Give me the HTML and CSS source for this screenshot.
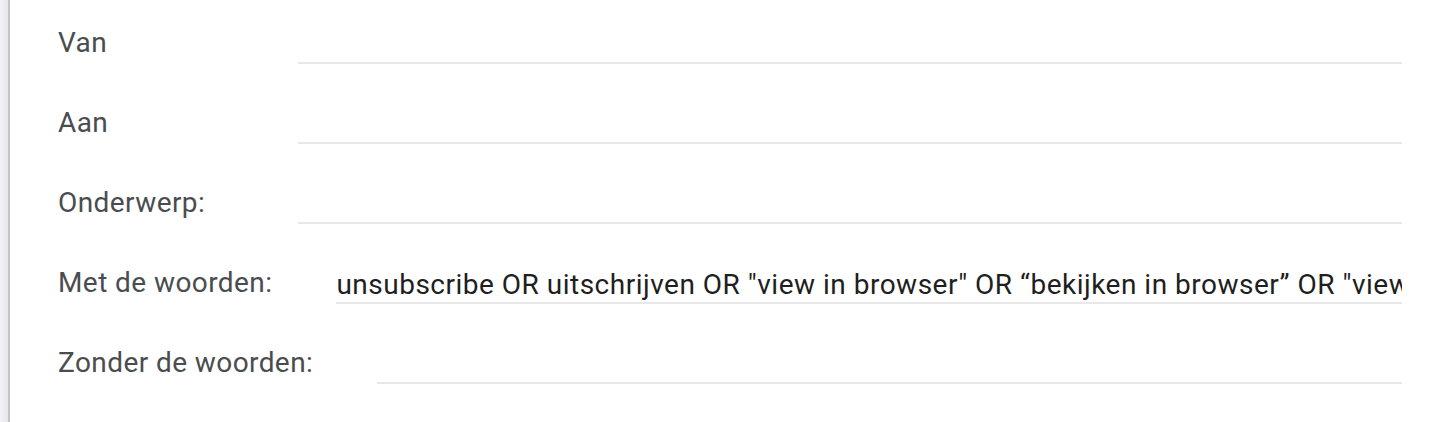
FILE: index.html
```html
<!DOCTYPE html>
<html lang="nl">
<head>
<meta charset="utf-8">
<title>Zoeken</title>
<link rel="stylesheet" href="styles.css">
</head>
<body>
<div class="shell">
  <div class="edge"></div>
  <form class="search-form">
    <div class="row">
      <label class="label" for="f-van">Van</label>
      <input class="field" id="f-van" type="text" value="">
    </div>
    <div class="row">
      <label class="label" for="f-aan">Aan</label>
      <input class="field" id="f-aan" type="text" value="">
    </div>
    <div class="row">
      <label class="label" for="f-ond">Onderwerp:</label>
      <input class="field" id="f-ond" type="text" value="">
    </div>
    <div class="row">
      <label class="label" for="f-met">Met de woorden:</label>
      <input class="field" id="f-met" type="text" value="unsubscribe OR uitschrijven OR &quot;view in browser&quot; OR “bekijken in browser” OR &quot;view online&quot;">
    </div>
    <div class="row">
      <label class="label" for="f-zonder">Zonder de woorden:</label>
      <input class="field" id="f-zonder" type="text" value="">
    </div>
  </form>
</div>
</body>
</html>
```
FILE: styles.css
```css
html, body {
  margin: 0;
  padding: 0;
  background: #ffffff;
}

.shell {
  display: flex;
  height: 422px;
  overflow: hidden;
}

.edge {
  width: 8px;
  flex: 0 0 8px;
  background: linear-gradient(to right, #f1f3f6, #e4e6ea);
  border-right: 2px solid #c4c5c8;
}

.search-form {
  flex: 1;
  display: flex;
  flex-direction: column;
  gap: 16px;
  padding: 0 36px 0 48px;
  font-family: Roboto, "Liberation Sans", Arial, sans-serif;
  font-size: 28px;
}

.row {
  display: flex;
  align-items: flex-end;
  height: 64px;
}

.label {
  min-width: 176px;
  margin-right: 64px;
  line-height: 36px;
  padding-bottom: 3px;
  color: #4a4d50;
  letter-spacing: 0.42px;
  white-space: nowrap;
}

.field {
  flex: 1;
  min-width: 0;
  margin: 0;
  padding: 0;
  border: 0;
  border-bottom: 2px solid #e8e8e8;
  outline: none;
  background: transparent;
  font: inherit;
  letter-spacing: 0.5px;
  line-height: 36px;
  height: 38px;
  box-sizing: border-box;
  color: #1f1f1f;
}
```
